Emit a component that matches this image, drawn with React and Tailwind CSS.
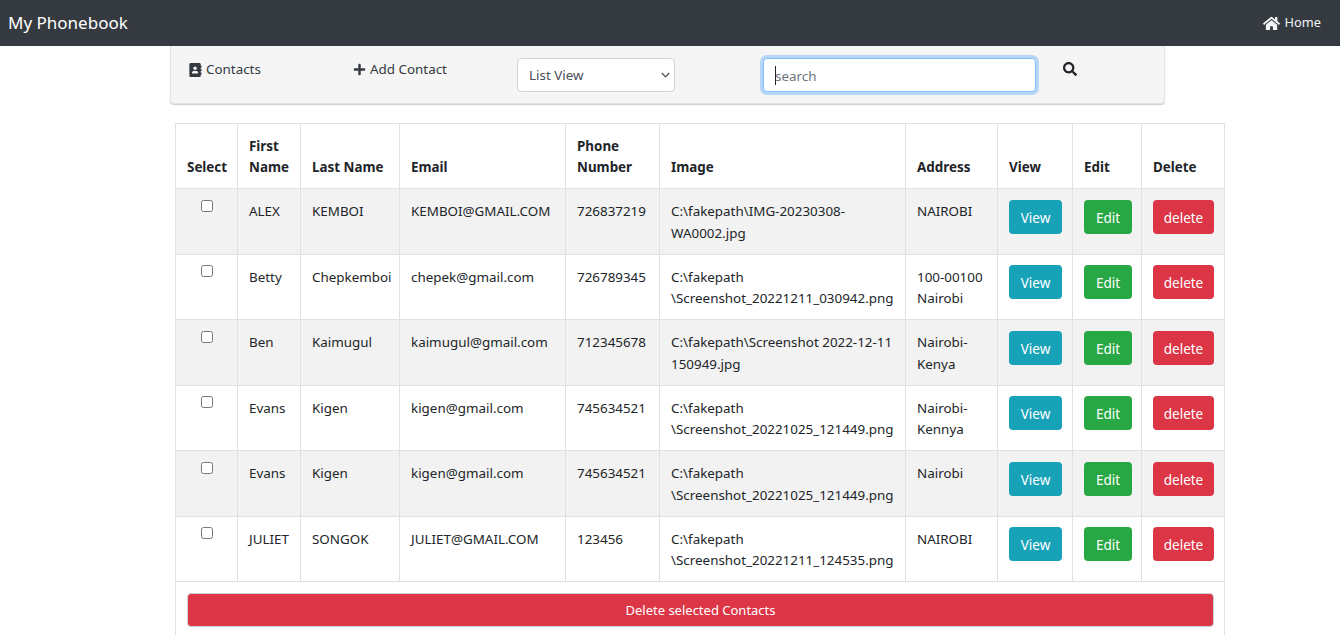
import React from "react";
import { FaAddressBook, FaPlus, FaSearch, FaHome } from "react-icons/fa";

const rows = [
  ["ALEX", "KEMBOI", "KEMBOI@GMAIL.COM", "726837219", ["C:\\fakepath\\IMG-20230308-", "WA0002.jpg"], ["NAIROBI"]],
  ["Betty", "Chepkemboi", "chepek@gmail.com", "726789345", ["C:\\fakepath", "\\Screenshot_20221211_030942.png"], ["100-00100", "Nairobi"]],
  ["Ben", "Kaimugul", "kaimugul@gmail.com", "712345678", ["C:\\fakepath\\Screenshot 2022-12-11", "150949.jpg"], ["Nairobi-", "Kenya"]],
  ["Evans", "Kigen", "kigen@gmail.com", "745634521", ["C:\\fakepath", "\\Screenshot_20221025_121449.png"], ["Nairobi-", "Kennya"]],
  ["Evans", "Kigen", "kigen@gmail.com", "745634521", ["C:\\fakepath", "\\Screenshot_20221025_121449.png"], ["Nairobi"]],
  ["JULIET", "SONGOK", "JULIET@GMAIL.COM", "123456", ["C:\\fakepath", "\\Screenshot_20221211_124535.png"], ["NAIROBI"]],
];

const widths = ["w-[62px]", "w-[63px]", "w-[99px]", "w-[166px]", "w-[94px]", "w-[246px]", "w-[92px]", "w-[75px]", "w-[69px]", "w-[83px]"];

const th = "border border-[#dee2e6] px-[11px] pt-[12.2px] pb-[10px] leading-[21px] align-bottom text-left font-bold whitespace-nowrap";
const td = "border border-[#dee2e6] px-[11px] pt-[12px] pb-[9.3px] align-top whitespace-nowrap";
const tdAction = "border border-[#dee2e6] px-[11px] pt-[10.8px] pb-0 align-top whitespace-nowrap";
const btn = "block h-[34px] rounded-[4px] text-white text-[13.5px] leading-[36px] text-center";

function Lines({ items }) {
  return items.map((t) => <div key={t}>{t}</div>);
}

export default function App() {
  return (
    <div className="h-[635px] overflow-hidden bg-white text-[#212529] text-[13.4px] leading-[21.6px] font-['Noto_Sans','Open_Sans',sans-serif]">
      <nav className="flex h-[46px] items-center justify-between bg-[#343a40] pl-2 pr-[19px] text-white">
        <span className="text-[17px] leading-[27px] relative -top-px">My Phonebook</span>
        <span className="flex items-center gap-[5px] text-[12.8px] text-[#f3f4f5]">
          <FaHome className="h-[17px] w-[17px]" />
          Home
        </span>
      </nav>

      <div className="ml-[170px] flex h-[58px] w-[995px] items-start rounded-b-[4px] border border-t-0 border-[#e3e3e3] bg-[#f5f5f5] pl-[18px] shadow-[0_1px_1px_rgba(0,0,0,0.2)]">
        <div className="mt-[13px] flex w-[164px] items-center gap-[4px] text-[#343a40]">
          <FaAddressBook className="h-[14px] w-[13px]" />
          Contacts
        </div>
        <div className="mt-[13px] flex w-[164px] items-center gap-[4px] text-[#343a40]">
          <FaPlus className="h-[13px] w-[13px]" />
          Add Contact
        </div>
        <div className="relative mt-[12px] h-[34px] w-[158px]">
          <select className="h-full w-full appearance-none rounded-[4px] border border-[#ced4da] bg-white pl-[11px] pt-[2px] text-[#495057]" defaultValue="List View">
            <option>List View</option>
          </select>
          <svg className="pointer-events-none absolute right-[5px] top-[14px] h-[6px] w-[9px]" viewBox="0 0 9 6" fill="none" stroke="#495057" strokeWidth="1.2">
            <path d="M0.8 1 L4.5 4.8 L8.2 1" />
          </svg>
        </div>
        <div className="relative mt-[12px] ml-[88px] h-[34px] w-[273px]">
          <input
            placeholder="search"
            readOnly
            className="h-full w-full rounded-[4px] border border-[#80bdff] bg-white pl-[11px] pt-[2px] text-[#495057] shadow-[0_0_0_3px_rgba(0,123,255,0.25)] outline-none placeholder:text-[#6c757d]"
          />
          <span className="absolute left-[12px] top-[8px] h-[19px] w-px bg-[#212529]" />
        </div>
        <FaSearch className="mt-[16px] ml-[27px] h-[14px] w-[14px] text-[#212529]" />
      </div>

      <div className="ml-[175px] mt-[19px] w-[1050px]">
        <table className="w-[1049px] table-fixed border-collapse">
          <colgroup>
            {widths.map((w, i) => (
              <col key={i} className={w} />
            ))}
          </colgroup>
          <thead>
            <tr>
              <th className={th}>Select</th>
              <th className={th}>First<br />Name</th>
              <th className={th}>Last Name</th>
              <th className={th}>Email</th>
              <th className={th}>Phone<br />Number</th>
              <th className={th}>Image</th>
              <th className={th}>Address</th>
              <th className={th}>View</th>
              <th className={th}>Edit</th>
              <th className={th}>Delete</th>
            </tr>
          </thead>
          <tbody>
            {rows.map((r, i) => (
              <tr key={i} className={i % 2 === 0 ? "bg-[#f2f2f2]" : "bg-white"}>
                <td className={tdAction + " text-center"}>
                  <input type="checkbox" className="block mx-auto h-[12px] w-[12px]" />
                </td>
                <td className={td}>{r[0]}</td>
                <td className={td}>{r[1]}</td>
                <td className={td}>{r[2]}</td>
                <td className={td}>{r[3]}</td>
                <td className={td}><Lines items={r[4]} /></td>
                <td className={td}><Lines items={r[5]} /></td>
                <td className={tdAction}><span className={btn + " w-[53px] bg-[#17a2b8]"}>View</span></td>
                <td className={tdAction}><span className={btn + " w-[48px] bg-[#28a745]"}>Edit</span></td>
                <td className={tdAction}><span className={btn + " w-[61px] bg-[#dc3545]"}>delete</span></td>
              </tr>
            ))}
            <tr>
              <td colSpan={10} className="border border-[#dee2e6] pl-[11px] pr-[10px] pt-[11px] pb-[11px]">
                <div className="h-[34px] rounded-[4px] border border-[#ced4da] bg-[#dc3545] text-center text-[13px] leading-[32px] text-white">
                  Delete selected Contacts
                </div>
              </td>
            </tr>
          </tbody>
        </table>
      </div>
    </div>
  );
}
